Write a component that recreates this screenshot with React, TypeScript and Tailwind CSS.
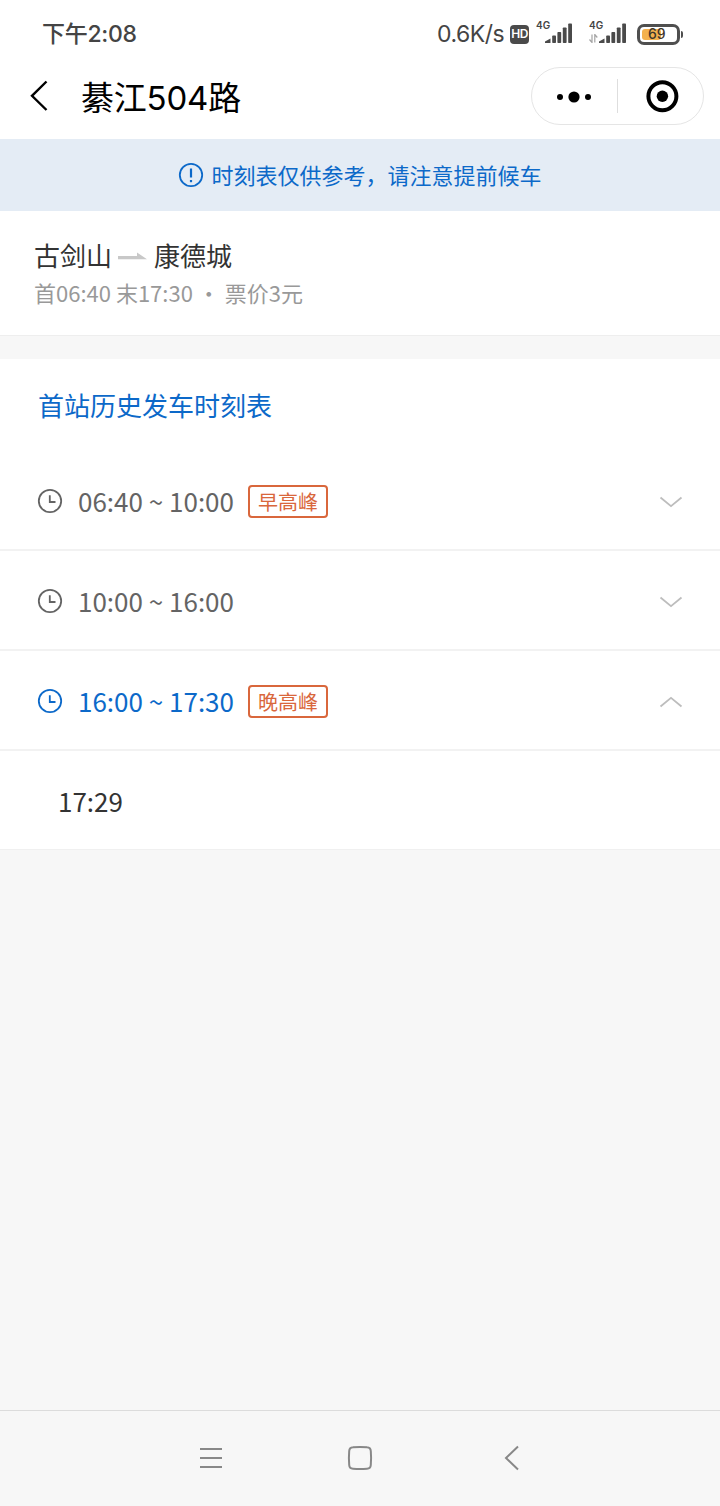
import React from 'react';

interface Period {
  range: string;
  tag?: string;
  open?: boolean;
}

const periods: Period[] = [
  { range: '06:40 ~ 10:00', tag: '早高峰' },
  { range: '10:00 ~ 16:00' },
  { range: '16:00 ~ 17:30', tag: '晚高峰', open: true },
];

const departures = ['17:29'];

const SignalBars: React.FC = () => (
  <svg className="mb-[3px] shrink-0" width="28" height="20" viewBox="0 0 28 20" fill="#4a4a4a">
    <path d="M0 20 L0 18.5 L5.5 15.5 L5.5 20 Z" />
    <rect x="7.2" y="12.5" width="3.8" height="7.5" rx="0.8" />
    <rect x="12.4" y="9" width="3.8" height="11" rx="0.8" />
    <rect x="17.8" y="4.5" width="3.8" height="15.5" rx="0.8" />
    <rect x="23.2" y="0.5" width="3.8" height="19.5" rx="0.8" />
  </svg>
);

const StatusBar: React.FC = () => (
  <div className="flex h-[68px] items-center pl-[42px] text-[#444444]">
    <span className="mt-px font-['Inter','Noto_Sans_CJK_SC',sans-serif] text-[23px] font-medium leading-none tracking-[-0.3px]">下午2:08</span>
    <span className="ml-auto mt-px w-[73px] whitespace-nowrap font-['Inter','Noto_Sans_CJK_SC',sans-serif] text-[23px] leading-none tracking-[-0.5px]">0.6K/s</span>
    <span className="flex h-[19px] w-[19px] items-center justify-center rounded bg-[#4a4a4a] font-['Inter',sans-serif] text-[12px] font-semibold leading-none tracking-[-0.5px] text-white">
      HD
    </span>

    {/* SIM 1 */}
    <div className="ml-[7px] flex h-6 w-[38px] items-end">
      <span className="-mt-0.5 w-[9px] self-start whitespace-nowrap font-['Inter',sans-serif] text-[10px] font-semibold leading-none">4G</span>
      <SignalBars />
    </div>

    {/* SIM 2 */}
    <div className="ml-[15px] flex h-6 w-[39px] items-end">
      <div className="flex h-full w-[10px] flex-col justify-between">
        <span className="-mt-0.5 whitespace-nowrap font-['Inter',sans-serif] text-[10px] font-semibold leading-none">4G</span>
        <svg className="mb-[3px]" width="9" height="9" viewBox="0 0 9 9" fill="none" stroke="#a3a3a3" strokeWidth="1.2">
          <path d="M3 0.5 V8.5 L0.5 5.5 M5.8 8.5 V0.5 L8.3 3.5" />
        </svg>
      </div>
      <SignalBars />
    </div>

    {/* Battery */}
    <div className="ml-[9px] mr-[37px] flex items-center">
      <div className="flex h-[21px] w-[43px] rounded-[7px] border-[3px] border-[#4f4f4f] p-[2px]">
        <div className="flex h-full w-[19px] items-center justify-start rounded-[3px] bg-[#f4b14e]">
          <span className="ml-[6px] font-['Inter',sans-serif] text-[14px] font-medium leading-none text-[#3f352a]">69</span>
        </div>
      </div>
      <div className="ml-px h-[7px] w-[2px] rounded-r bg-[#4f4f4f]" />
    </div>
  </div>
);

const NavBar: React.FC = () => (
  <header className="flex h-[71px] items-start pl-[30px] pr-4 text-black">
    <svg className="mt-3" width="18" height="32" viewBox="0 0 18 32" fill="none" stroke="currentColor" strokeWidth="2.4">
      <path d="M16.5 1.5 L2 15.8 L16.5 30" />
    </svg>
    <h1 className="ml-[33px] mt-[10px] whitespace-nowrap font-['Inter','Noto_Sans_CJK_SC',sans-serif] text-[33px] leading-10 tracking-[-0.2px]">綦江504路</h1>
    <div className="-mt-px ml-auto flex h-[58px] w-[173px] items-center rounded-full border border-[#e5e5e5]">
      <svg className="ml-[25px] mt-px" width="35" height="12" viewBox="0 0 35 12" fill="currentColor">
        <circle cx="3" cy="6" r="3" />
        <circle cx="17" cy="6" r="5.6" />
        <circle cx="31" cy="6" r="3" />
      </svg>
      <span className="ml-[25px] h-[34px] w-px bg-[#dedede]" />
      <svg className="ml-[27px]" width="34" height="34" viewBox="0 0 34 34">
        <circle cx="17.4" cy="17.2" r="14" fill="none" stroke="currentColor" strokeWidth="4" />
        <circle cx="17.4" cy="17.2" r="5.7" fill="currentColor" />
      </svg>
    </div>
  </header>
);

const ClockIcon: React.FC = () => (
  <svg className="mt-0.5" width="26" height="26" viewBox="0 0 26 26" fill="none" stroke="currentColor" strokeWidth="1.8">
    <circle cx="13" cy="13" r="11.2" />
    <path d="M12.8 7.3 V14 H18.5" />
  </svg>
);

const PeriodRow: React.FC<{ period: Period }> = ({ period }) => (
  <div className={`flex h-[100px] items-center border-b-2 border-[#f2f2f2] pl-[37px] pr-[37px] ${period.open ? 'text-[#0c69c9]' : 'text-[#646464]'}`}>
    <ClockIcon />
    <span className="ml-[15px] mt-0.5 text-[26px] leading-9">{period.range}</span>
    {period.tag && (
      <span className="ml-[14px] mt-0.5 flex h-[33px] w-20 items-center justify-center rounded-sm border-2 border-[#d9673c] pt-0.5 text-[20px] leading-none text-[#d9673c]">
        {period.tag}
      </span>
    )}
    <svg className="ml-auto mt-1" width="24" height="12" viewBox="0 0 24 12" fill="none" stroke="#bdbdbd" strokeWidth="1.8">
      <path d={period.open ? 'M1.5 10.5 L12 1.8 L22.5 10.5' : 'M1.5 1.5 L12 10.2 L22.5 1.5'} />
    </svg>
  </div>
);

const SystemNav: React.FC = () => (
  <nav className="mt-auto flex h-24 items-center border-t border-[#dcdcdc] pb-0.5 pl-[199px] text-[#888888]">
    <svg width="24" height="24" viewBox="0 0 24 24" stroke="currentColor" strokeWidth="2">
      <path d="M1 3 H23 M1 12 H23 M1 21 H23" />
    </svg>
    <svg className="ml-[124px]" width="26" height="26" viewBox="0 0 26 26" fill="none" stroke="currentColor" strokeWidth="2">
      <path d="M6 2.2 Q13 1.6 20 2.2 Q23.6 2.4 23.8 6 Q24.4 13 23.8 20 Q23.6 23.6 20 23.8 Q13 24.4 6 23.8 Q2.4 23.6 2.2 20 Q1.6 13 2.2 6 Q2.4 2.4 6 2.2 Z" />
    </svg>
    <svg className="ml-[131px]" width="16" height="26" viewBox="0 0 16 26" fill="none" stroke="currentColor" strokeWidth="2">
      <path d="M14 1.5 L2 13 L14 24.5" />
    </svg>
  </nav>
);

export default function App() {
  return (
    <div className="flex h-[1506px] w-[720px] flex-col overflow-hidden bg-[#f7f7f7] font-['Noto_Sans_CJK_SC',sans-serif]">
      <div className="bg-white">
        <StatusBar />
        <NavBar />
      </div>

      {/* Notice */}
      <div className="flex h-[72px] items-center justify-center bg-[#e4ecf5] text-[#0c69c9]">
        <svg width="26" height="26" viewBox="0 0 26 26" fill="none" stroke="currentColor" strokeWidth="1.8">
          <circle cx="13" cy="13" r="11.2" />
          <path d="M13 6.5 V15.5" strokeWidth="2.2" />
          <path d="M13 18 V20.2" strokeWidth="2.2" />
        </svg>
        <span className="-mt-0.5 ml-[7px] text-[22px] leading-8">时刻表仅供参考，请注意提前候车</span>
      </div>

      {/* Route */}
      <section className="h-[125px] border-b border-[#eeeeee] bg-white pl-[34px] pt-[25px]">
        <div className="flex items-center text-[26px] leading-[38px] text-[#333333]">
          <span>古剑山</span>
          <svg className="ml-[6px] mr-[7px] mt-0.5" width="29" height="8" viewBox="0 0 29 8" fill="#c8c8c8">
            <path d="M0 4 H19 V0.5 L29 7.2 H0 Z" />
          </svg>
          <span>康德城</span>
        </div>
        <p className="text-[22px] leading-9 text-[#999999]">首06:40 末17:30 ・ 票价3元</p>
      </section>

      {/* Timetable */}
      <section className="mt-[23px] bg-white">
        <h2 className="h-[92px] pl-[38px] pt-[27px] text-[26px] leading-[38px] text-[#0c69c9]">首站历史发车时刻表</h2>
        {periods.map((period) => (
          <PeriodRow key={period.range} period={period} />
        ))}
        {departures.map((time) => (
          <div key={time} className="flex h-[99px] items-center border-b border-[#f0f0f0] pl-[58px] pt-0.5 text-[26px] leading-9 text-[#333333]">
            {time}
          </div>
        ))}
      </section>

      <SystemNav />
    </div>
  );
}
